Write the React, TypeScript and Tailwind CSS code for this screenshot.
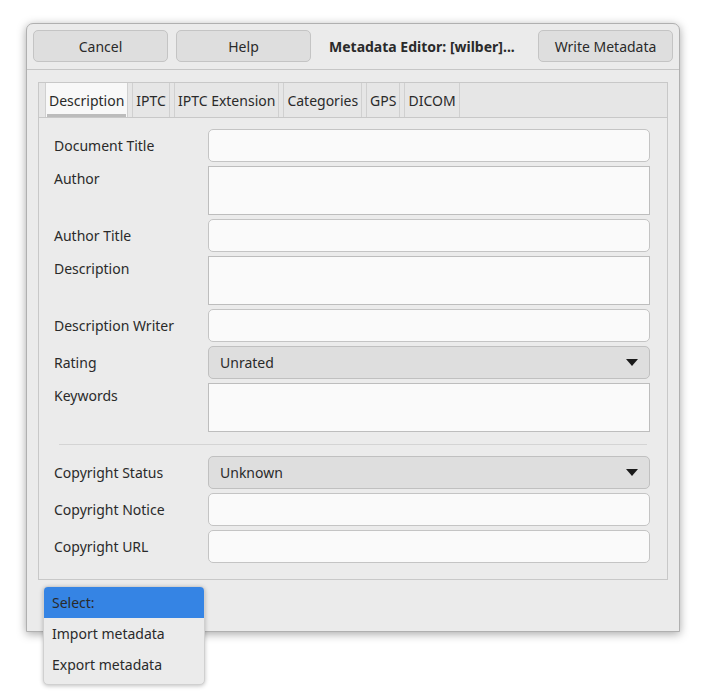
import React from "react"

const tabs = ["Description", "IPTC", "IPTC Extension", "Categories", "GPS", "DICOM"]

function Entry() {
  return <div className="h-[33px] rounded-[5px] border border-[#c4c4c4] bg-[#fafafa]" />
}

function TextView() {
  return <div className="h-[49px] border border-[#bdbdbd] bg-[#fafafa]" />
}

function Combo({ value }: { value: string }) {
  return (
    <div className="flex h-[33px] items-center justify-between rounded-[5px] border border-[#c0c0c0] bg-[#dedede] pl-[11px] pr-[11px]">
      <span>{value}</span>
      <svg width="12" height="7" viewBox="0 0 12 7"><path d="M0 0h12L6 7z" fill="#1a1a1a" /></svg>
    </div>
  )
}

function Row({ label, children, top }: { label: string; children: React.ReactNode; top?: boolean }) {
  return (
    <>
      <div className={top ? "pt-[3px] leading-5" : "flex h-[33px] items-center"}>{label}</div>
      {children}
    </>
  )
}

export default function App() {
  return (
    <div className="relative h-[691px] w-[706px] overflow-hidden bg-white pl-[26px] pt-[23px] text-[14px] text-[#2a2a2a]" style={{ fontFamily: '"Noto Sans", "DejaVu Sans", sans-serif' }}>
      <div className="flex h-[609px] w-[654px] flex-col rounded-t-[7px] border border-[#b0b0b0] bg-[#ebebeb] shadow-[0_2px_10px_rgba(0,0,0,0.35)]">
        {/* header bar */}
        <div className="flex h-[46px] items-start border-b border-[#c6c6c6] px-[6px] pt-[6px]">
          <button className="h-[32px] w-[135px] rounded-[5px] border border-[#c4c4c4] bg-[#dedede]">Cancel</button>
          <button className="ml-[8px] h-[32px] w-[135px] rounded-[5px] border border-[#c4c4c4] bg-[#dedede]">Help</button>
          <div className="flex h-[32px] flex-1 items-center pl-[18px] font-bold">Metadata Editor: [wilber]...</div>
          <button className="h-[32px] w-[135px] rounded-[5px] border border-[#c4c4c4] bg-[#dedede]">Write Metadata</button>
        </div>
        {/* notebook */}
        <div className="mx-[11px] mt-[12px] flex h-[498px] flex-col border border-[#c8c8c8]">
          <div className="flex h-[35px] items-end gap-[4px] border-b border-[#c8c8c8] bg-[#e6e6e6] pl-[6px]">
            {tabs.map((t, i) => (
              <div key={t} className={"flex h-[34px] items-center border-x border-[#d0d0d0] px-[3px] " + (i === 0 ? "relative bg-[#f8f8f8]" : "")}>
                {t}
                {i === 0 && <div className="absolute bottom-[0px] left-[1px] right-[1px] h-[3px] bg-[#bcbcbc]" />}
              </div>
            ))}
          </div>
          <div className="flex-1 px-[15px] pt-[11px]">
            <div className="grid grid-cols-[154px_1fr] gap-y-[4px] pr-[2px]">
              <Row label="Document Title"><Entry /></Row>
              <Row label="Author" top><TextView /></Row>
              <Row label="Author Title"><Entry /></Row>
              <Row label="Description" top><TextView /></Row>
              <Row label="Description Writer"><Entry /></Row>
              <Row label="Rating"><Combo value="Unrated" /></Row>
              <Row label="Keywords" top><TextView /></Row>
            </div>
            <div className="mx-[5px] mb-[11px] mt-[12px] h-px bg-[#d4d4d4]" />
            <div className="grid grid-cols-[154px_1fr] gap-y-[4px] pr-[2px]">
              <Row label="Copyright Status"><Combo value="Unknown" /></Row>
              <Row label="Copyright Notice"><Entry /></Row>
              <Row label="Copyright URL"><Entry /></Row>
            </div>
          </div>
        </div>
      </div>
      {/* popup menu */}
      <div className="absolute left-[43px] top-[586px] w-[162px] overflow-hidden rounded-[5px] border border-[#d0d0d0] bg-[#ebebeb] shadow-[0_1px_4px_rgba(0,0,0,0.25)]">
        <div className="flex h-[31px] items-center bg-[#3584e4] pl-[8px]">Select:</div>
        <div className="flex h-[31px] items-center pl-[8px]">Import metadata</div>
        <div className="mb-[4px] flex h-[31px] items-center pl-[8px]">Export metadata</div>
      </div>
    </div>
  )
}
